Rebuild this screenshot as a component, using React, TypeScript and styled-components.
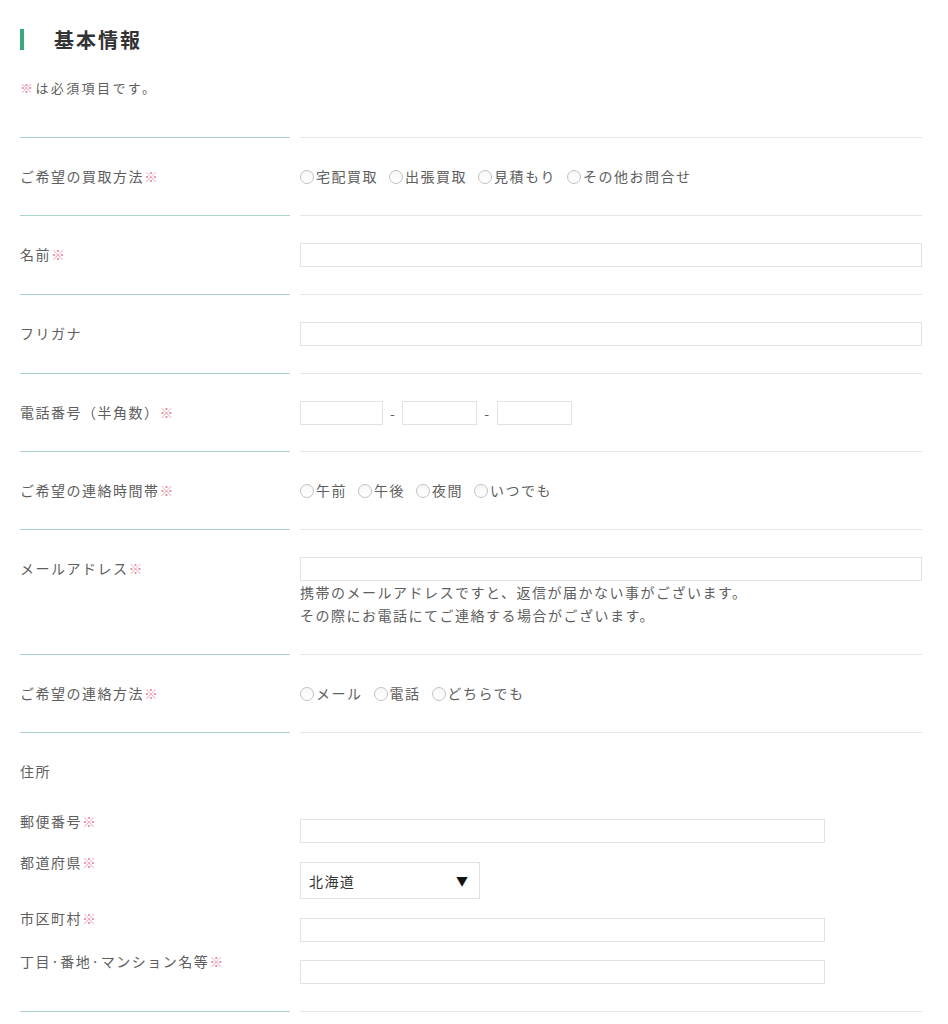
import React from "react";
import styled, { createGlobalStyle, css } from "styled-components";

const GlobalStyle = createGlobalStyle`
  * {
    box-sizing: border-box;
  }
  body {
    margin: 0;
    background: #fff;
    font-family: "Noto Sans CJK JP", "Noto Sans", sans-serif;
    color: #5e5e5e;
  }
`;

// two-tone rule: teal under the label column, grey under the field column
const splitRule = (edge: "top" | "bottom") => css`
  &::before,
  &::after {
    content: "";
    position: absolute;
    ${edge}: 0;
    height: 1px;
  }
  &::before {
    left: 0;
    width: 270px;
    background: #a9d5ca;
  }
  &::after {
    left: 280px;
    width: 622px;
    background: #e6e6e6;
  }
`;

const Wrapper = styled.div`
  width: 922px;
  padding: 26px 0 0 20px;
`;

const Heading = styled.h2`
  margin: 0;
  display: flex;
  align-items: center;
  height: 26px;
  font-size: 20px;
  font-weight: 700;
  letter-spacing: 2px;
  color: #333;

  &::before {
    content: "";
    width: 4px;
    height: 21px;
    background: #36a97d;
    margin-right: 30px;
  }
`;

const Note = styled.p`
  margin: 24px 0 0;
  font-size: 13px;
  letter-spacing: 2.4px;
  line-height: 24px;
  color: #5e5e5e;
`;

const Req = styled.span`
  color: #e4899f;
`;

const Form = styled.form`
  position: relative;
  margin-top: 37px;
  padding-top: 1px;
  ${splitRule("top")}
`;

const Row = styled.div`
  position: relative;
  display: grid;
  grid-template-columns: 270px 622px;
  column-gap: 10px;
  align-items: start;
  padding: 27px 0 28px;
  font-size: 14px;
  letter-spacing: 1.5px;
  line-height: 23px;
  ${splitRule("bottom")}
`;

const Label = styled.div<{ $gapBelow?: number }>`
  color: #5e5e5e;
  line-height: 23px;
  margin-bottom: ${(p) => p.$gapBelow ?? 0}px;
`;

const Field = styled.div<{ $offset?: number }>`
  margin-top: ${(p) => p.$offset ?? 0}px;
`;

const TextInput = styled.input<{ $width?: number }>`
  display: block;
  width: ${(p) => (p.$width ? `${p.$width}px` : "100%")};
  height: 24px;
  border: 1px solid #e2e2e2;
  background: #fff;
  padding: 0 6px;
  font: inherit;
  outline: none;
`;

const RadioGroup = styled.div`
  display: flex;
  align-items: center;
  gap: 11px;
  height: 23px;
`;

const RadioItem = styled.label`
  display: flex;
  align-items: center;
  color: #5e5e5e;
  cursor: pointer;
`;

const RadioCircle = styled.span`
  width: 14px;
  height: 14px;
  border-radius: 50%;
  border: 1px solid #c2c2c2;
  background: linear-gradient(#f7f7f7, #fff);
  margin-right: 2px;
  flex-shrink: 0;
`;

const PhoneRow = styled.div`
  display: flex;
  align-items: flex-start;
  height: 23px;
  line-height: 24px;
`;

const Dash = styled.span`
  color: #5e5e5e;
  margin: 0 6px 0 7px;
`;

const Help = styled.p`
  margin: 0;
  line-height: 23px;
  color: #5e5e5e;
`;

const SubGrid = styled.div`
  grid-column: 1 / -1;
  display: grid;
  grid-template-columns: 270px 622px;
  column-gap: 10px;
  row-gap: 7px;
  align-items: start;

  & > div {
    line-height: 24px;
  }
`;

const SelectBox = styled.div`
  position: relative;
  width: 180px;
  height: 37px;

  &::after {
    content: "▼";
    position: absolute;
    right: 12px;
    top: 50%;
    transform: translateY(-50%);
    font-size: 12px;
    color: #111;
    pointer-events: none;
    letter-spacing: 0;
  }
`;

const Select = styled.select`
  appearance: none;
  width: 100%;
  height: 100%;
  border: 1px solid #e2e2e2;
  background: #fff;
  padding: 0 8px;
  font: inherit;
  font-size: 14px;
  letter-spacing: 1.4px;
  color: #333;
  outline: none;
`;

const RequiredLabel: React.FC<{ text: string; required?: boolean }> = ({ text, required }) => (
  <Label>
    {text}
    {required && <Req>※</Req>}
  </Label>
);

const Radios: React.FC<{ name: string; options: string[] }> = ({ name, options }) => (
  <RadioGroup>
    {options.map((o) => (
      <RadioItem key={o}>
        <RadioCircle />
        <span>{o}</span>
        <input type="radio" name={name} hidden />
      </RadioItem>
    ))}
  </RadioGroup>
);

const App: React.FC = () => {
  return (
    <>
      <GlobalStyle />
      <Wrapper>
        <Heading>基本情報</Heading>
        <Note>
          <Req>※</Req>は必須項目です。
        </Note>

        <Form onSubmit={(e) => e.preventDefault()}>
          <Row>
            <RequiredLabel text="ご希望の買取方法" required />
            <Radios name="method" options={["宅配買取", "出張買取", "見積もり", "その他お問合せ"]} />
          </Row>

          <Row>
            <RequiredLabel text="名前" required />
            <TextInput />
          </Row>

          <Row>
            <RequiredLabel text="フリガナ" />
            <TextInput />
          </Row>

          <Row>
            <RequiredLabel text="電話番号（半角数）" required />
            <PhoneRow>
              <TextInput $width={83} />
              <Dash>-</Dash>
              <TextInput $width={75} />
              <Dash>-</Dash>
              <TextInput $width={75} />
            </PhoneRow>
          </Row>

          <Row>
            <RequiredLabel text="ご希望の連絡時間帯" required />
            <Radios name="time" options={["午前", "午後", "夜間", "いつでも"]} />
          </Row>

          <Row>
            <RequiredLabel text="メールアドレス" required />
            <div>
              <TextInput />
              <Help>
                携帯のメールアドレスですと、返信が届かない事がございます。
                <br />
                その際にお電話にてご連絡する場合がございます。
              </Help>
            </div>
          </Row>

          <Row>
            <RequiredLabel text="ご希望の連絡方法" required />
            <Radios name="contact" options={["メール", "電話", "どちらでも"]} />
          </Row>

          <Row>
            <Label $gapBelow={26}>住所</Label>
            <div />
            <SubGrid>
              <RequiredLabel text="郵便番号" required />
              <Field $offset={10}>
                <TextInput $width={525} />
              </Field>

              <RequiredLabel text="都道府県" required />
              <Field $offset={12}>
                <SelectBox>
                  <Select defaultValue="北海道">
                    <option>北海道</option>
                    <option>青森県</option>
                    <option>岩手県</option>
                  </Select>
                </SelectBox>
              </Field>

              <RequiredLabel text="市区町村" required />
              <Field $offset={12}>
                <TextInput $width={525} />
              </Field>

              <RequiredLabel text="丁目·番地·マンション名等" required />
              <Field $offset={11}>
                <TextInput $width={525} />
              </Field>
            </SubGrid>
          </Row>
        </Form>
      </Wrapper>
    </>
  );
};

export default App;
